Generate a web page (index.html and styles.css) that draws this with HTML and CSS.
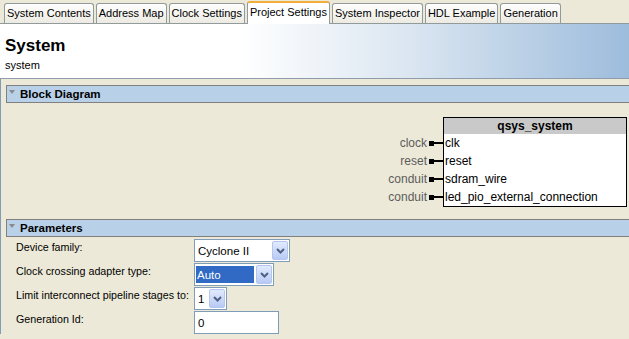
FILE: index.html
```html
<!DOCTYPE html>
<html lang="en">
<head>
    <meta charset="UTF-8">
    <meta name="viewport" content="width=device-width, initial-scale=1.0">
    <title>Project Settings</title>
    <link rel="stylesheet" href="styles.css">
</head>
<body>
    <div class="tabs">
        <div class="tab">System Contents</div>
        <div class="tab">Address Map</div>
        <div class="tab">Clock Settings</div>
        <div class="tab active">Project Settings</div>
        <div class="tab">System Inspector</div>
        <div class="tab">HDL Example</div>
        <div class="tab">Generation</div>
    </div>

    <div class="header">
        <div class="title">System</div>
        <div class="subtitle">system</div>
    </div>

    <div class="panel">
        <div class="section-head"><span class="twisty"></span>Block Diagram</div>
        <div class="diagram">
            <div class="ports">
                <div class="port"><span>clock</span><i class="pin"></i><i class="wire"></i></div>
                <div class="port"><span>reset</span><i class="pin"></i><i class="wire"></i></div>
                <div class="port"><span>conduit</span><i class="pin"></i><i class="wire"></i></div>
                <div class="port"><span>conduit</span><i class="pin"></i><i class="wire"></i></div>
            </div>
            <div class="module">
                <div class="module-name">qsys_system</div>
                <div class="module-row">clk</div>
                <div class="module-row">reset</div>
                <div class="module-row">sdram_wire</div>
                <div class="module-row">led_pio_external_connection</div>
            </div>
        </div>

        <div class="section-head"><span class="twisty"></span>Parameters</div>
        <div class="params">
            <label>Device family:</label>
            <div class="select device">
                <span class="value">Cyclone II</span>
                <span class="drop"><svg width="9" height="6" viewBox="0 0 9 6"><path d="M1 1l3.5 3.5L8 1" fill="none" stroke="#4d6185" stroke-width="2"/></svg></span>
            </div>

            <label>Clock crossing adapter type:</label>
            <div class="select adapter">
                <span class="value picked">Auto</span>
                <span class="drop"><svg width="9" height="6" viewBox="0 0 9 6"><path d="M1 1l3.5 3.5L8 1" fill="none" stroke="#4d6185" stroke-width="2"/></svg></span>
            </div>

            <label>Limit interconnect pipeline stages to:</label>
            <div class="select stages">
                <span class="value">1</span>
                <span class="drop"><svg width="9" height="6" viewBox="0 0 9 6"><path d="M1 1l3.5 3.5L8 1" fill="none" stroke="#4d6185" stroke-width="2"/></svg></span>
            </div>

            <label>Generation Id:</label>
            <div class="field">0</div>
        </div>
    </div>
</body>
</html>
```

FILE: styles.css
```css
body {
    margin: 0;
    background-color: #ece9d8;
    font-family: "Liberation Sans", Arial, sans-serif;
    font-size: 11px;
    color: #000;
    overflow: hidden;
}
.tabs {
    display: flex;
    align-items: flex-end;
    gap: 2px;
    height: 23px;
    padding-left: 4px;
}
.tab {
    height: 19px;
    line-height: 19px;
    padding: 0 2px;
    border: 1px solid #919b9c;
    border-bottom: none;
    border-radius: 3px 3px 0 0;
    background: linear-gradient(#fefefe, #eceae2);
    white-space: nowrap;
}
.tab.active {
    height: 21px;
    line-height: 19px;
    margin-bottom: -1px;
    position: relative;
    background: #fff;
    border-top: 2px solid #f3ad3a;
}
.header {
    height: 42px;
    padding: 12px 5px 0;
    border-top: 1px solid #919b9c;
    border-bottom: 1px solid #8d9bab;
    background: linear-gradient(to right, #fff 0, #fff 38%, #dbe6f1 65%, #9dbcdc 100%);
}
.title {
    font-size: 17px;
    font-weight: bold;
    line-height: 20px;
}
.subtitle {
    margin-top: 2px;
    line-height: 14px;
}
.panel {
    border-left: 1px solid #7f9db9;
    padding-top: 6px;
}
.section-head {
    display: flex;
    align-items: center;
    height: 16px;
    margin-left: 5px;
    border: 1px solid #808080;
    border-right: none;
    background-color: #b8d0e8;
    font-size: 11.5px;
    font-weight: bold;
}
.twisty {
    width: 0;
    height: 0;
    margin: 0 5px 4px 2px;
    border-left: 3.5px solid transparent;
    border-right: 3.5px solid transparent;
    border-top: 4px solid #8a8a8a;
}
.diagram {
    display: flex;
    justify-content: flex-end;
    padding: 14px 2px 12px 0;
    font-size: 12px;
}
.ports {
    display: flex;
    flex-direction: column;
    align-items: flex-end;
    padding-top: 17px;
}
.port {
    display: flex;
    align-items: center;
    height: 18px;
    color: #5c5c5c;
}
.pin {
    width: 5px;
    height: 5px;
    margin-left: 2px;
    background: #000;
}
.wire {
    width: 9px;
    height: 2px;
    background: #000;
}
.module {
    width: 184px;
    box-sizing: border-box;
    border: 1px solid #000;
    background: #fff;
}
.module-name {
    height: 16px;
    line-height: 16px;
    text-align: center;
    font-weight: bold;
    background-color: #c9c9c9;
}
.module-row {
    height: 18px;
    line-height: 18px;
    padding-left: 1px;
    white-space: nowrap;
}
.params {
    display: grid;
    grid-template-columns: 178px auto;
    row-gap: 1px;
    padding: 2px 0 0 15px;
}
.params label {
    padding-top: 2px;
    line-height: 13px;
    font-size: 10.7px;
    white-space: nowrap;
}
.select, .field {
    display: flex;
    box-sizing: border-box;
    height: 23px;
    border: 1px solid #7f9db9;
    background: #fff;
    font-size: 11.5px;
}
.select .value {
    flex: 1;
    display: flex;
    align-items: center;
    padding-left: 3px;
}
.select .value.picked {
    margin: 2px 2px 2px 1px;
    padding-left: 1px;
    background-color: #316ac5;
    color: #fff;
}
.drop {
    display: flex;
    align-items: center;
    justify-content: center;
    width: 14px;
    margin: 1px 1px 1px 0;
    border: 1px solid #b4c6ef;
    border-radius: 2px;
    background: linear-gradient(#e2eafd, #b8caf4);
}
.device { width: 96px; }
.adapter { width: 80px; }
.stages { width: 33px; }
.field {
    width: 85px;
    align-items: center;
    padding-left: 3px;
}
```
